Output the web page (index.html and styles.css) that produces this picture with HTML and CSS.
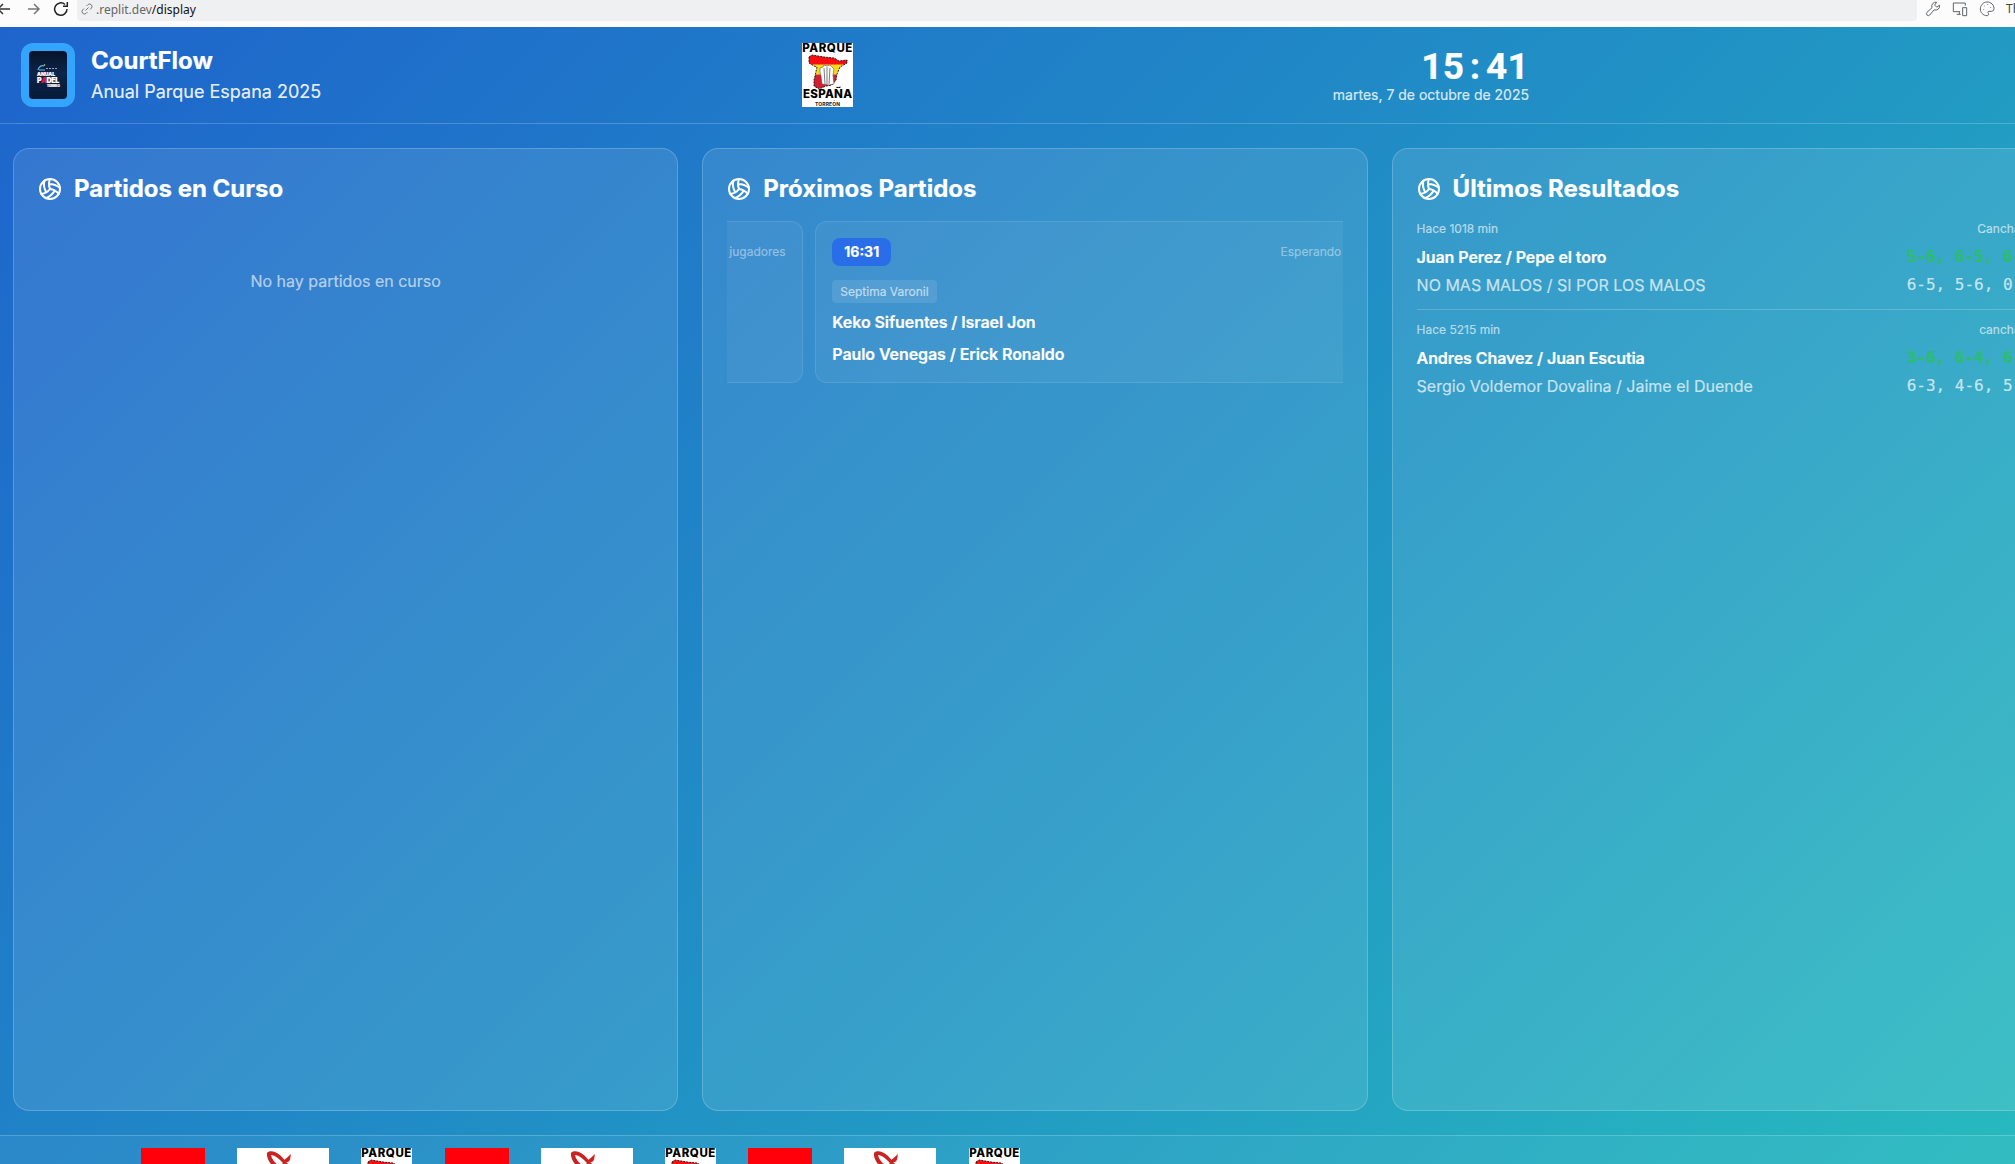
FILE: index.html
```html
<!DOCTYPE html>
<html lang="es">
<head>
<meta charset="utf-8">
<title>CourtFlow</title>
<link rel="stylesheet" href="styles.css">
</head>
<body>
<svg width="0" height="0" class="defs">
  <symbol id="ball" viewBox="0 0 24 24" fill="none" stroke="currentColor" stroke-width="2" stroke-linecap="round" stroke-linejoin="round">
    <path d="M11.1 7.1a16.55 16.55 0 0 1 10.9 4M12 12a12.6 12.6 0 0 1-8.7 5M16.8 13.6a16.55 16.55 0 0 1-9 7.5M20.7 17a12.8 12.8 0 0 0-8.7-5 13.3 13.3 0 0 1 0-10M6.3 3.8a16.55 16.55 0 0 0 1.9 11.5"/><circle cx="12" cy="12" r="10"/>
  </symbol>
  <symbol id="parque" viewBox="0 0 51 64">
    <rect width="51" height="64" fill="#fff"/>
    <text x=".3" y="9" class="logo-name" textLength="50">PARQUE</text>
    <clipPath id="spain"><path d="M7 14l3-2 12 2 10 1 5 3 8-1v3l-7 4-3 7-1 6-4 5-6 1-7 3-5-3v-6l1-4 2-9-3-1-5-3z"/></clipPath>
    <g clip-path="url(#spain)"><path fill="#fa0d10" d="M0 10h51v12H0z"/><path fill="#f9da16" d="M0 21.500h51v10H0z"/><path fill="#d01f30" d="M0 31.500h51v14H0z"/></g>
    <path d="M7 14l3-2 12 2 10 1 5 3 8-1v3l-7 4-3 7-1 6-4 5-6 1-7 3-5-3v-6l1-4 2-9-3-1-5-3z" fill="none" stroke="#111" stroke-width=".9" stroke-dasharray="2 1"/>
    <path d="M18 25l3-1 1-2 3 1 3-1 2 2 2 2-1 6 1 9-5 1-7-1-1-8-1-4z" fill="#fff" stroke="#555" stroke-width=".6"/><path d="M22 25l1 16M25 24v17M28 25l-1 16" stroke="#444" stroke-width=".7"/>
    <text x="1" y="55" class="logo-name" textLength="49">ESPAÑA</text>
    <text x="13" y="63" class="logo-city" textLength="25">TORREÓN</text>
  </symbol>
  <symbol id="swirl" viewBox="0 0 92 64">
    <rect width="92" height="64" fill="#fff"/>
    <path d="M30 5c2-3 9-2 14 3 4 4 6 7 8 9l-4 4c5 3 6 4 8 7H43l-2-5C34 18 29 10 30 5zM34 7c1 5 5 9 9 11l3-3c-4-4-8-8-12-8z" fill="#c82424" fill-rule="evenodd"/>
    <path d="M45 14c3-3 5-4 9-8-1 4 0 6-3 8z" fill="#c82424"/>
  </symbol>
</svg>
<div class="browser">
  <div class="nav">
    <svg width="16" height="16" viewBox="0 0 16 16" class="back"><path d="M14 8H2M7 3L2 8l5 5"/></svg>
    <svg width="16" height="16" viewBox="0 0 16 16" class="fwd"><path d="M2 8h11M8 3l5 5-5 5"/></svg>
    <svg width="16" height="16" viewBox="0 0 16 16" class="reload"><path d="M14 8a6.2 6.2 0 1 1-2-4.500M14.300 1v4.300h-4.300"/></svg>
  </div>
  <div class="url">
    <svg width="12" height="12" viewBox="0 0 24 24"><path d="M9 15l6-6M11 6l3-3a5 5 0 0 1 7 7l-3 3M13 18l-3 3a5 5 0 0 1-7-7l3-3"/></svg>
    <span>.replit.dev<b>/display</b></span>
  </div>
  <div class="tools">
    <svg width="16" height="16" viewBox="0 0 24 24"><path d="M14.700 6.300l3 3 4-3a6 6 0 0 1-8 7L7 21a2.300 2.300 0 0 1-4-4l7.500-7a6 6 0 0 1 7-8l-3 4z"/></svg>
    <svg width="16" height="16" viewBox="0 0 24 24"><path d="M12 16H2V3h18v4M7 20h6M11 16v4M16 10h6v12h-6z"/></svg>
    <svg width="16" height="16" viewBox="0 0 24 24"><path d="M12 22c-6 0-10-5-10-10S6 1.500 12 1.500 22.500 6 22.500 11c0 4-3 5-6 4.500s-4 1-2.500 3-.5 3.500-2 3.500zM7 12v1M8 7v1M13 5v1M17.500 9v1"/></svg>
    <span>Th</span>
  </div>
</div>
<div class="app">
  <header>
    <div class="brand">
      <div class="badge"><div class="poster">
        <svg width="22" height="7" viewBox="0 0 22 7"><path d="M1 6c1-4 4-5 6-4M2 6h6" fill="none" stroke="#5bb5f5" stroke-width="1.200"/><path d="M9 4.500h11" stroke="#8fa3bd" stroke-dasharray="2 1"/><circle cx="7.500" cy="1" r=".8" fill="#e8e15a"/></svg>
        <span class="anual">ANUAL</span><span class="padel">P<em>A</em>DEL</span><span class="tor">TORNEO</span>
      </div></div>
      <div><h1>CourtFlow</h1><p>Anual Parque Espana 2025</p></div>
    </div>
    <svg width="51" height="64"><use href="#parque"/></svg>
    <div class="when"><div class="clock"><span>1</span><span>5</span><span>:</span><span>4</span><span>1</span></div><div class="date">martes, 7 de octubre de 2025</div></div>
  </header>
  <main>
    <section class="panel">
      <h2><svg width="24" height="24"><use href="#ball"/></svg>Partidos en Curso</h2>
      <p class="empty">No hay partidos en curso</p>
    </section>
    <section class="panel">
      <h2><svg width="24" height="24"><use href="#ball"/></svg>Próximos Partidos</h2>
      <div class="carousel">
        <article class="match prev"><div class="top"><span class="wait">jugadores</span></div></article>
        <article class="match">
          <div class="top"><span class="time">16:31</span><span class="wait">Esperando</span></div>
          <span class="cat">Septima Varonil</span>
          <p>Keko Sifuentes / Israel Jon</p>
          <p>Paulo Venegas / Erick Ronaldo</p>
        </article>
      </div>
    </section>
    <section class="panel">
      <h2><svg width="24" height="24"><use href="#ball"/></svg>Últimos Resultados</h2>
      <article class="result">
        <div class="meta"><span>Hace 1018 min</span><span>Cancha 1</span></div>
        <div class="win"><span>Juan Perez / Pepe el toro</span><span class="score">5-6, 6-5, 6-0</span></div>
        <div class="lose"><span>NO MAS MALOS / SI POR LOS MALOS</span><span class="score">6-5, 5-6, 0-6</span></div>
      </article>
      <article class="result">
        <div class="meta"><span>Hace 5215 min</span><span>cancha 1</span></div>
        <div class="win"><span>Andres Chavez / Juan Escutia</span><span class="score">3-6, 6-4, 6-5</span></div>
        <div class="lose"><span>Sergio Voldemor Dovalina / Jaime el Duende</span><span class="score">6-3, 4-6, 5-6</span></div>
      </article>
    </section>
  </main>
  <footer>
    <div class="red"></div><svg width="92" height="64"><use href="#swirl"/></svg><svg width="51" height="64"><use href="#parque"/></svg>
    <div class="red"></div><svg width="92" height="64"><use href="#swirl"/></svg><svg width="51" height="64"><use href="#parque"/></svg>
    <div class="red"></div><svg width="92" height="64"><use href="#swirl"/></svg><svg width="51" height="64"><use href="#parque"/></svg>
  </footer>
</div>
</body>
</html>
```
FILE: styles.css
```css
* { box-sizing: border-box; margin: 0; padding: 0; }
html, body { height: 1164px; overflow: hidden; }
body { font-family: Inter, sans-serif; color: #fff; font-size: 16px; line-height: 24px; }
svg { display: block; flex: none; }
.defs { position: absolute; }
.logo-name { font: 800 11.500px Inter, sans-serif; fill: #000; }
.logo-city { font: 700 5px Inter, sans-serif; fill: #222; }

.browser { height: 27px; display: flex; background: #fcfcfd; overflow: hidden; }
.browser svg { fill: none; stroke: #5f6368; stroke-width: 1.500; }
.browser .nav { width: 77px; display: flex; gap: 12px; padding-top: 1px; flex: none; }
.nav .back { margin-left: -4px; stroke: #333; }
.nav .fwd { stroke: #777; margin-left: 2px; }
.nav .reload { stroke: #222; margin-left: -1px; }
.url { width: 1840px; height: 21px; background: #eff0f2; border-radius: 0 0 4px 4px; display: flex; gap: 3px; padding: 3px 0 0 4px; font: 12px/13px "Noto Sans", sans-serif; color: #666; flex: none; }
.browser .url svg { stroke-width: 2; stroke: #777; }
.url b { font-weight: 400; color: #111; }
.tools { display: flex; gap: 11px; padding: 1px 0 0 8px; color: #444; font: 12px/16px "Noto Sans", sans-serif; }

.app { width: 2071px; height: 1188px; background: linear-gradient(135deg, #1e64cc 0%, #2196c4 58%, #28bdbe 100%); -webkit-text-stroke: .2px; }
header { height: 97px; border-bottom: 1px solid rgba(255,255,255,.2); padding: 16px 21px; display: grid; grid-template-columns: 781px 51px 676px; align-items: start; }
.brand { display: flex; gap: 16px; }
.badge { width: 54px; height: 64px; border-radius: 12px; background: #33a5ff; padding: 8px; }
.poster { width: 38px; height: 48px; border-radius: 4px; background: linear-gradient(180deg, #061329, #0c2448 45%, #071a38); font: 900 5px/6px Inter, sans-serif; padding: 13px 0 0 8px; display: flex; flex-direction: column; }
.poster .padel { font-size: 7px; line-height: 7px; letter-spacing: -.3px; }
.poster em { color: #e91c45; }
.poster .tor { font-size: 3px; line-height: 4px; padding-left: 10px; }
h1 { font-size: 24px; line-height: 32px; font-weight: 700; margin-top: 2px; }
.brand p { font-size: 18px; line-height: 29px; color: rgba(255,255,255,.9); }
.when { text-align: right; padding-top: 6px; }
.clock { display: flex; justify-content: flex-end; font: 700 37px/36px Roboto, sans-serif; }
.clock span { width: 21.600px; text-align: center; }
.date { font-size: 14px; line-height: 20px; color: rgba(255,255,255,.8); }

main { display: grid; grid-template-columns: repeat(3, 665.300px); gap: 24px; padding: 24px 13px; height: 1011px; }
.panel { height: 963px; border: 1px solid rgba(255,255,255,.2); border-radius: 16px; background: rgba(255,255,255,.1); padding: 24px; min-width: 0; }
h2 { display: flex; align-items: center; gap: 12px; font-size: 24px; line-height: 32px; font-weight: 700; margin-bottom: 16px; }
.empty { text-align: center; color: rgba(255,255,255,.6); padding-top: 48px; }
.carousel { display: flex; gap: 12px; overflow: hidden; }
.match { width: 614px; height: 162px; flex: none; border: 1px solid rgba(255,255,255,.1); background: rgba(255,255,255,.05); border-radius: 12px; padding: 16px; font-weight: 600; letter-spacing: -.08px; }
.match.prev { width: 76px; border-left: 0; border-radius: 0 12px 12px 0; padding-left: 2px; }
.top { display: flex; align-items: center; justify-content: space-between; height: 28px; margin-bottom: 14px; font-size: 12px; font-weight: 400; letter-spacing: 0; }
.match:not(.prev) .top { width: 509px; }
.time { background: #2a6de8; border-radius: 8px; padding: 0 12px; line-height: 28px; font-size: 14px; font-weight: 700; }
.wait { color: rgba(255,255,255,.4); }
.cat { display: block; width: max-content; background: rgba(255,255,255,.1); border-radius: 4px; padding: 0 8px; font-size: 12px; line-height: 23px; font-weight: 400; color: rgba(255,255,255,.6); margin-bottom: 7px; letter-spacing: 0; }
.match p { margin-bottom: 8px; }
.result { padding-bottom: 10px; }
.result + .result { border-top: 1px solid rgba(255,255,255,.2); padding-top: 12px; }
.result > div { display: flex; justify-content: space-between; height: 28px; line-height: 28px; }
.result .meta { font-size: 12px; line-height: 16px; height: 16px; margin-bottom: 6px; padding-right: 3px; color: rgba(255,255,255,.6); }
.win { font-weight: 600; letter-spacing: -.08px; }
.result .lose { color: rgba(255,255,255,.7); }
.score { font-family: "DejaVu Sans Mono", monospace; font-weight: 400; letter-spacing: 0; }
.win .score { color: #2dbe6c; font-weight: 700; }

footer { height: 80px; border-top: 1px solid rgba(255,255,255,.2); background: rgba(255,255,255,.05); padding: 12px 0 0 141px; display: flex; gap: 32.200px; }
.red { width: 64px; height: 64px; background: #ff000a; }
```
